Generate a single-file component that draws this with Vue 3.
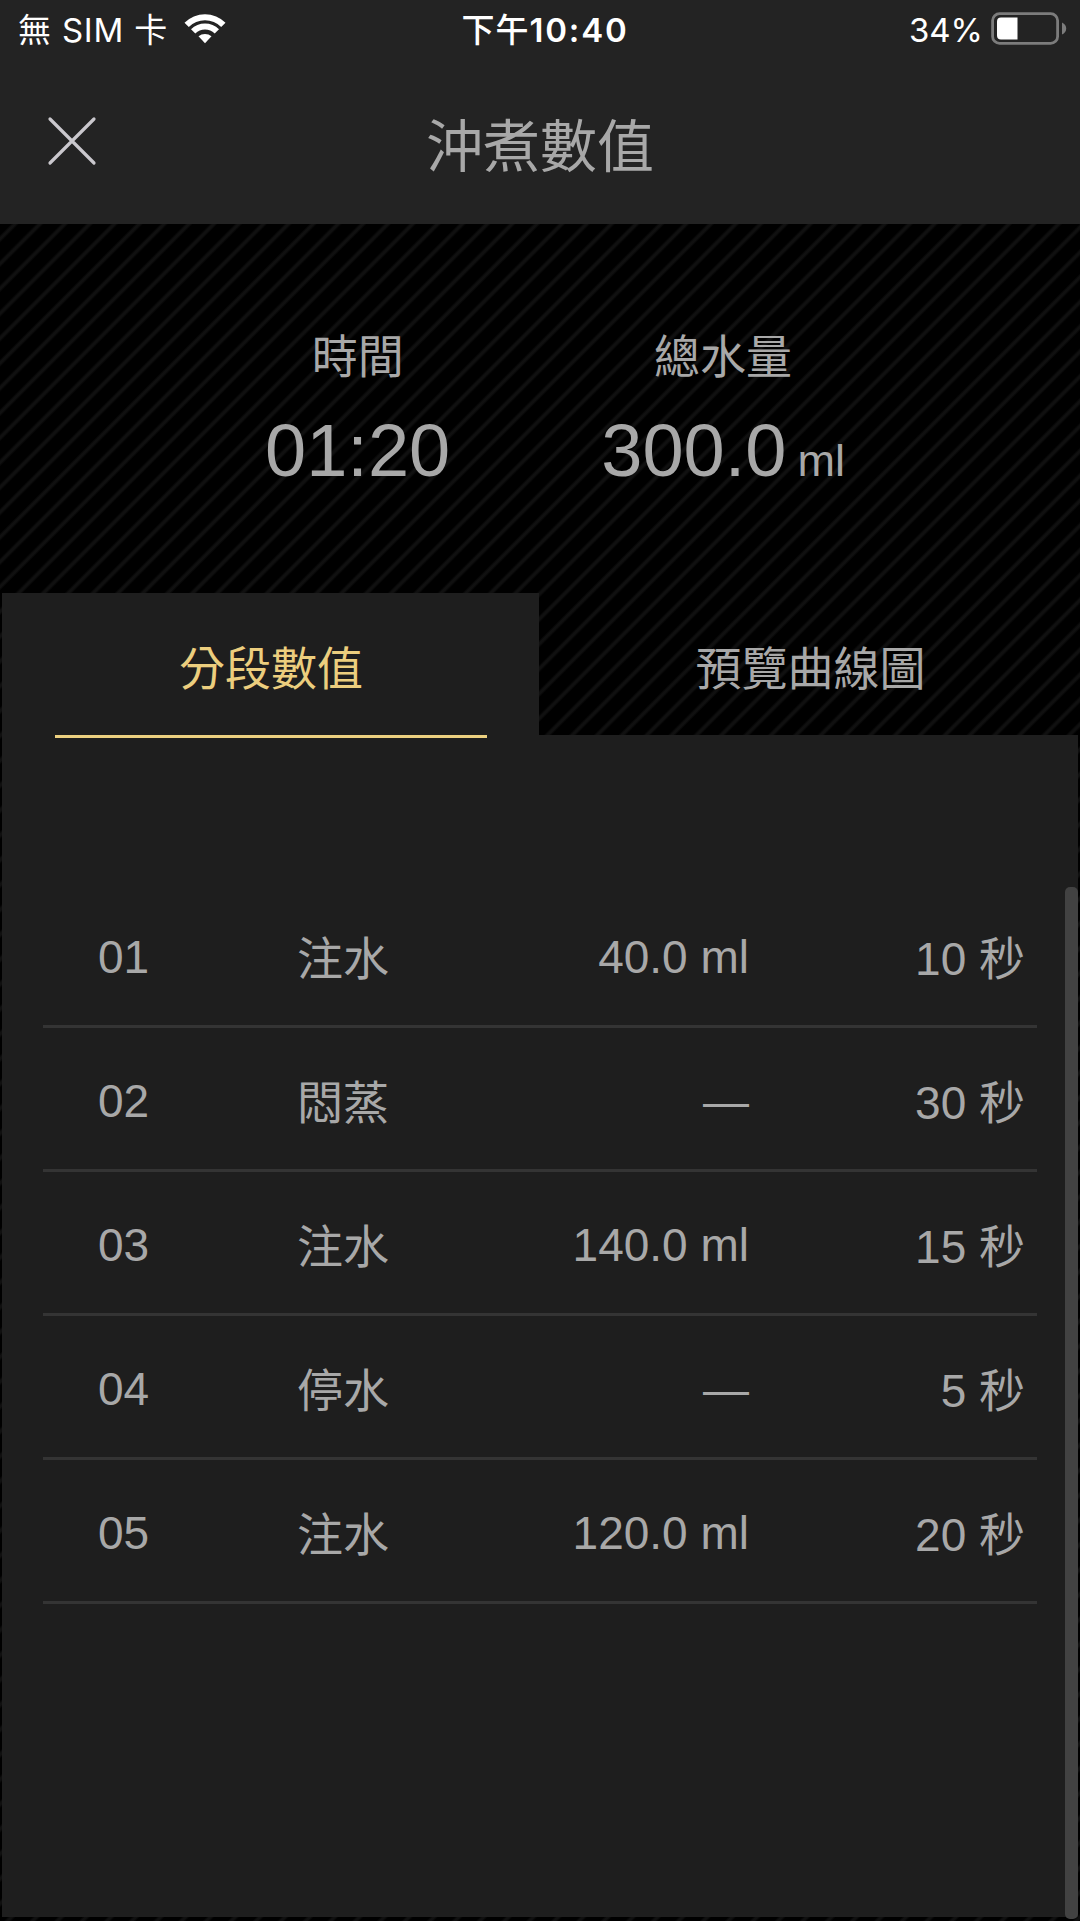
<script setup>
import { ref } from 'vue';

const tabs = ['分段數值', '預覽曲線圖'];
const activeTab = ref(0);

const steps = [
	{ no: '01', action: '注水', water: '40.0 ml', seconds: 10 },
	{ no: '02', action: '悶蒸', water: '—', seconds: 30 },
	{ no: '03', action: '注水', water: '140.0 ml', seconds: 15 },
	{ no: '04', action: '停水', water: '—', seconds: 5 },
	{ no: '05', action: '注水', water: '120.0 ml', seconds: 20 },
];
</script>

<template>
	<div class="screen">
		<header class="top">
			<div class="status-bar">
				<div class="carrier">
					<span>無 SIM 卡</span>
					<svg class="wifi" width="42" height="31" viewBox="0 0 42 31">
						<path d="M0.5 8.7A29.2 29.2 0 0 1 41.5 8.7L37.2 13A23.1 23.1 0 0 0 4.8 13Z" />
						<path d="M7 15.2A20 20 0 0 1 35 15.2L30.7 19.5A13.9 13.9 0 0 0 11.3 19.5Z" />
						<path d="M14.5 22.3A10 10 0 0 1 27.5 22.3L21 29.3Z" />
					</svg>
				</div>
				<div class="clock">下午<b>10:40</b></div>
				<div class="power">
					<span>34%</span>
					<svg width="76" height="34" viewBox="0 0 76 34">
						<rect x="1.6" y="1.6" width="65" height="29.8" rx="7" fill="none" stroke="#7c7c7c" stroke-width="2.8" />
						<path d="M10 5.5h16.5v22H10a4 4 0 0 1-4-4v-14a4 4 0 0 1 4-4Z" fill="#fff" />
						<path d="M71 10.5q4.2 2 4.2 6t-4.2 6Z" fill="#7c7c7c" />
					</svg>
				</div>
			</div>
			<div class="nav-bar">
				<button class="close" aria-label="關閉">
					<svg width="50" height="50" viewBox="0 0 50 50">
						<path d="M3 3L47 47M47 3L3 47" />
					</svg>
				</button>
				<h1>沖煮數值</h1>
			</div>
		</header>

		<section class="summary">
			<div class="stat">
				<p class="label">時間</p>
				<p class="value">01:20</p>
			</div>
			<div class="stat">
				<p class="label">總水量</p>
				<p class="value">300.0<small>ml</small></p>
			</div>
		</section>

		<nav class="tabs">
			<button
				v-for="(tab, i) in tabs"
				:key="tab"
				class="tab"
				:class="{ active: activeTab === i }"
				@click="activeTab = i"
			>
				<span>{{ tab }}</span>
			</button>
		</nav>

		<main class="panel">
			<ul class="steps">
				<li v-for="step in steps" :key="step.no">
					<span>{{ step.no }}</span>
					<span class="action">{{ step.action }}</span>
					<span class="num">{{ step.water }}</span>
					<span class="num sec">{{ step.seconds }} 秒</span>
				</li>
			</ul>
			<div class="scrollbar"></div>
		</main>
	</div>
</template>

<style>
body {
	margin: 0;
	background: #000;
}
</style>

<style scoped>
.screen {
	display: flex;
	flex-direction: column;
	box-sizing: border-box;
	width: 1080px;
	height: 1921px;
	overflow: hidden;
	color: #a8a8a8;
	font-family: "Liberation Sans", "Noto Sans CJK TC", sans-serif;
	font-size: 46px;
	font-weight: 400;
	background: repeating-linear-gradient(135deg, #000 0, #000 7.6px, #101010 9.8px, #101010 11.4px, #000 13.6px, #000 17.57px) 0 224px no-repeat #000;
}
.top {
	height: 224px;
	background: #232323;
}
.status-bar {
	display: grid;
	grid-template-columns: 1fr auto 1fr;
	height: 60px;
	color: #fff;
	font-family: Inter, "Noto Sans CJK TC", sans-serif;
	font-size: 33px;
	font-weight: 400;
	line-height: 60px;
	white-space: nowrap;
}
.carrier {
	display: flex;
	padding-left: 18px;
	letter-spacing: 0.8px;
}
.wifi {
	margin: 14px 0 0 16px;
	fill: #fff;
}
.clock {
	margin: 0 -5px 0 5px;
	font-weight: 500;
	letter-spacing: 1px;
}
.clock b {
	font-weight: 600;
	letter-spacing: 1.8px;
}
.power {
	display: flex;
	justify-content: flex-end;
	padding-right: 13px;
}
.power svg {
	margin: 12px 0 0 8px;
}
.nav-bar {
	display: grid;
	grid-template-columns: 144px 1fr 144px;
	align-items: center;
	height: 164px;
}
.close {
	width: 50px;
	height: 50px;
	margin: -2px 0 0 47px;
	padding: 0;
	border: 0;
	background: transparent;
}
.close svg {
	display: block;
	stroke: #cac8cd;
	stroke-width: 3.2;
	stroke-linecap: round;
}
h1 {
	margin: 9px 0 0;
	font-size: 57px;
	font-weight: 400;
	line-height: 80px;
	text-align: center;
}
p {
	margin: 0;
}
.summary {
	display: flex;
	justify-content: center;
	gap: 151px;
	box-sizing: border-box;
	height: 368px;
	padding: 103px 0 0 30px;
	text-align: center;
}
.label {
	line-height: 60px;
}
.value {
	margin-top: 20px;
	font-size: 74px;
	line-height: 88px;
	white-space: nowrap;
}
.value small {
	margin-left: 11px;
	font-size: 45px;
}
.tabs {
	display: grid;
	grid-template-columns: 539px 1fr;
	height: 143px;
}
.tab {
	display: flex;
	flex-direction: column;
	justify-content: flex-end;
	padding: 0 51px 0 53px;
	border: 0;
	background: transparent;
	color: inherit;
	font: inherit;
}
.tab span {
	height: 93px;
	line-height: 60px;
	text-align: center;
	border-bottom: 3px solid transparent;
}
.tab.active {
	z-index: 1;
	margin: 1px 0 -3px 2px;
	padding: 0 52px 0 53px;
	background: #1e1e1e;
	color: #ecce7e;
}
.tab.active span {
	height: 96px;
	border-color: #ecd080;
}
.panel {
	display: flex;
	justify-content: space-between;
	height: 1182px;
	margin: 0 2px;
	background: #1e1e1e;
}
.steps {
	width: 994px;
	margin: 149px 0 0 41px;
	padding: 0;
	list-style: none;
}
.steps li {
	display: grid;
	grid-template-columns: 199px 150px 302px 276px;
	box-sizing: border-box;
	height: 144px;
	padding: 46px 0 0 55px;
	line-height: 54px;
	border-bottom: 3px solid #343434;
	white-space: nowrap;
}
.action,
.sec {
	padding-top: 2px;
}
.num {
	text-align: right;
}
.scrollbar {
	width: 13px;
	height: 1032px;
	margin-top: 152px;
	border-radius: 5px;
	background: #424242;
}
</style>
